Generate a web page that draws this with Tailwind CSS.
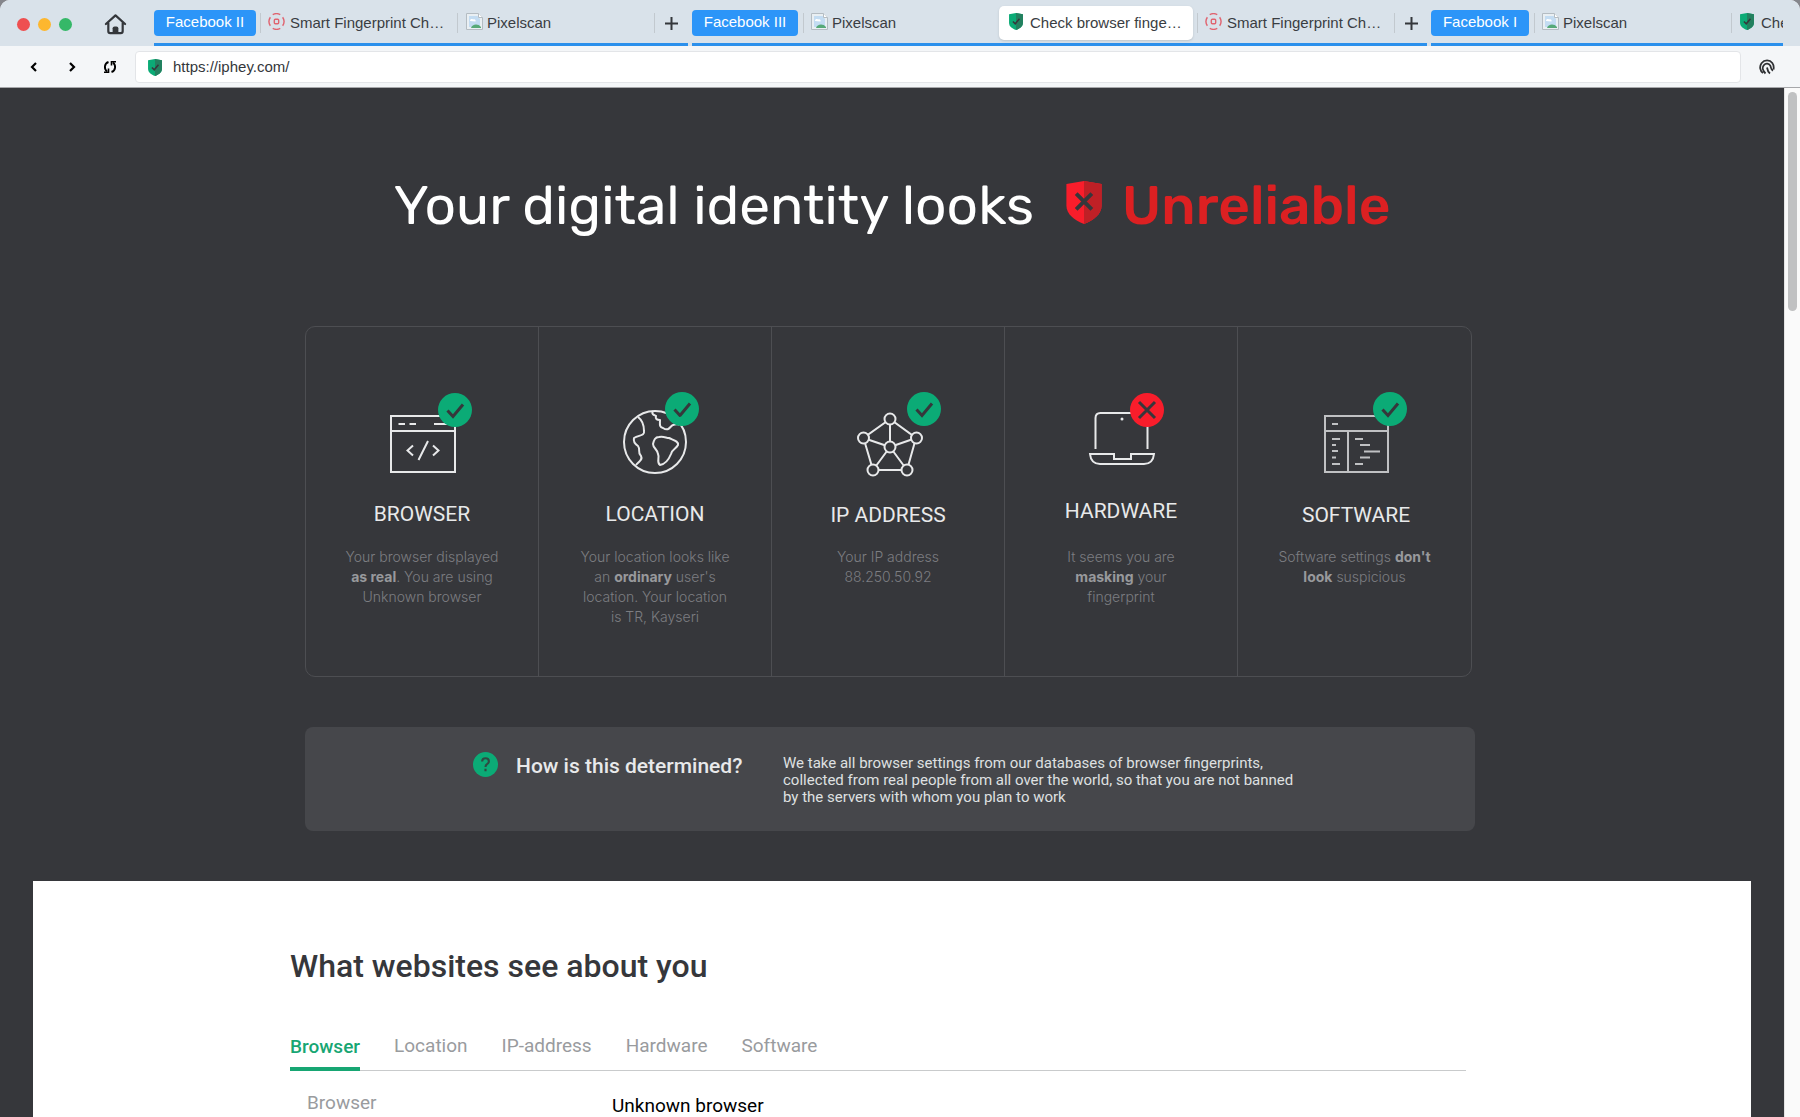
<!DOCTYPE html>
<html lang="en">
<head>
<meta charset="utf-8">
<meta name="viewport" content="width=device-width, initial-scale=1">
<title>Check browser fingerprint</title>
<script src="https://cdn.jsdelivr.net/npm/@tailwindcss/browser@4"></script>
</head>
<body class="bg-[#85868c]">
<svg class="hidden" aria-hidden="true">
  <symbol id="shield" viewBox="0 0 36 44">
    <path d="M18 0 36 3v22c0 9-8 15-18 19C8 40 0 34 0 25V3z" fill="#0bab76"/>
    <path d="M18 0 36 3v22c0 9-8 15-18 19z" fill="#23805f"/>
    <path d="M10 22l6 6 11-13" fill="none" stroke="#36373b" stroke-width="4"/>
  </symbol>
  <symbol id="target" viewBox="0 0 18 18">
    <g fill="none" stroke="#e06470" stroke-width="1.5">
      <path d="M5 1.700a8.300 8.300 0 0 1 8 0M5 16.300a8.300 8.300 0 0 0 8 0M2.500 4.500a8 8 0 0 0 0 9M15.500 4.500a8 8 0 0 1 0 9"/>
      <rect x="6.700" y="6.700" width="4.600" height="4.600" rx="1"/>
    </g>
  </symbol>
  <symbol id="broken" viewBox="0 0 17 17">
    <path d="M.5.5h12l4 4v12H.5z" fill="#e9eff3" stroke="#b4bcc2"/>
    <path d="M3 3h8.500l2.500 3v8H3z" fill="#c3dcf2"/>
    <path d="M4 8c0-2 2-2.500 3-1.500C9 5.500 10 7 9.500 8.500z" fill="#fff"/>
    <path d="M5 15c1-4 7-5 10-1v1z" fill="#56a978"/>
    <path d="M12.500.5v4h4" fill="#fff" stroke="#b4bcc2"/>
  </symbol>
  <symbol id="pass" viewBox="0 0 34 34">
    <circle cx="17" cy="17" r="17" fill="#0bab76" stroke="none"/>
    <path d="M9.500 17.500l5.500 6 10-12" fill="none" stroke="#36373b" stroke-width="3"/>
  </symbol>
  <symbol id="fail" viewBox="0 0 34 34">
    <circle cx="17" cy="17" r="17" fill="#f91d2b" stroke="none"/>
    <path d="M9 9l16 16M25 9L9 25" fill="none" stroke="#36373b" stroke-width="3"/>
  </symbol>
</svg>

<div class="flex h-screen flex-col overflow-hidden rounded-t-[10px] bg-[#f4f6f8]">
  <!-- Tab strip -->
  <header class="flex h-[46px] shrink-0 bg-[#d9e2ea] pr-[17px] font-['Liberation_Sans',Arial,sans-serif] text-[15px] text-[#393d42]">
    <div class="flex w-[154px] shrink-0 items-center pl-[17px] pt-[2px]">
      <div class="flex gap-2">
        <button aria-label="Close" class="size-[13px] rounded-full bg-[#ee4f50]"></button>
        <button aria-label="Minimize" class="size-[13px] rounded-full bg-[#fdb72f]"></button>
        <button aria-label="Zoom" class="size-[13px] rounded-full bg-[#35b868]"></button>
      </div>
      <button aria-label="Home" class="ml-8">
        <svg class="size-[23px]" viewBox="0 0 24 24" fill="none" stroke="#34373b" stroke-width="2.300" stroke-linecap="round" stroke-linejoin="round"><path d="M2 11.500 12 2.500 22 11.500M4.500 10.500V19q0 2 2 2h11q2 0 2-2v-8.500"/><path d="M9 20.500V16q0-2 2-2h2q2 0 2 2v4.500z" fill="#34373b" stroke="none"/></svg>
      </button>
    </div>
    <nav class="flex min-w-0 flex-1 gap-1 overflow-hidden" aria-label="Tabs">
      <div class="flex shrink-0 items-start border-b-3 border-[#2b90ec]">
        <button class="mt-[10px] mr-1 h-[26px] w-[102px] rounded-[4px] bg-[#2c95f8] pb-px text-white">Facebook II</button>
        <button class="mt-[13px] flex h-5 w-[197px] items-center gap-[5px] border-l border-[#c2c9cf] pl-[7px]"><svg class="mb-1 size-[17px]"><use href="#target"/></svg>Smart Fingerprint Ch…</button>
        <button class="mt-[13px] flex h-5 w-[197px] items-center gap-[4px] border-l border-[#c2c9cf] pl-2"><svg class="mb-1 size-[17px]"><use href="#broken"/></svg>Pixelscan</button>
        <button aria-label="New tab" class="mt-[13px] flex h-5 w-[34px] items-center justify-center border-l border-[#c2c9cf]"><svg class="size-[13px]" viewBox="0 0 13 13" stroke="#34373b" stroke-width="2"><path d="M6.500 0v13M0 6.500h13"/></svg></button>
      </div>
      <div class="flex shrink-0 items-start border-b-3 border-[#2b90ec]">
        <button class="mt-[10px] mr-[5px] h-[26px] w-[106px] rounded-[4px] bg-[#2c95f8] pb-px text-white">Facebook III</button>
        <button class="mt-[13px] flex h-5 w-[196px] items-center gap-[4px] border-l border-[#c2c9cf] pl-[7px]"><svg class="mb-1 size-[17px]"><use href="#broken"/></svg>Pixelscan</button>
        <button class="mt-[6px] mr-[4px] flex h-[34px] w-[194px] items-center gap-[7px] rounded-[5px] bg-white pl-[10px] shadow-sm"><svg class="mb-1 h-[17px] w-[14px]"><use href="#shield"/></svg>Check browser finge…</button>
        <button class="mt-[13px] flex h-5 w-[197px] items-center gap-[5px] border-l border-[#c2c9cf] pl-[7px]"><svg class="mb-1 size-[17px]"><use href="#target"/></svg>Smart Fingerprint Ch…</button>
        <button aria-label="New tab" class="mt-[13px] flex h-5 w-[33px] items-center justify-center border-l border-[#c2c9cf]"><svg class="size-[13px]" viewBox="0 0 13 13" stroke="#34373b" stroke-width="2"><path d="M6.500 0v13M0 6.500h13"/></svg></button>
      </div>
      <div class="flex shrink-0 items-start border-b-3 border-[#2b90ec]">
        <button class="mt-[10px] mr-[5px] h-[26px] w-[98px] rounded-[4px] bg-[#2c95f8] pb-px text-white">Facebook I</button>
        <button class="mt-[13px] flex h-5 w-[197px] items-center gap-[4px] border-l border-[#c2c9cf] pl-[7px]"><svg class="mb-1 size-[17px]"><use href="#broken"/></svg>Pixelscan</button>
        <button class="mt-[13px] flex h-5 w-[197px] items-center gap-[7px] border-l border-[#c2c9cf] pl-2"><svg class="mb-1 h-[17px] w-[14px]"><use href="#shield"/></svg>Check browser finge…</button>
      </div>
    </nav>
  </header>

  <!-- Address row -->
  <div class="flex h-[42px] shrink-0 items-center border-b border-[#a6a7aa] pt-px">
    <div class="flex w-[135px] shrink-0 items-center gap-6 pl-[27px]">
      <button aria-label="Back"><svg class="size-[14px]" viewBox="0 0 14 14" fill="none" stroke="#000" stroke-width="2.200"><path d="M9 3 5 7l4 4"/></svg></button>
      <button aria-label="Forward"><svg class="size-[14px]" viewBox="0 0 14 14" fill="none" stroke="#000" stroke-width="2.200"><path d="M5 3l4 4-4 4"/></svg></button>
      <button aria-label="Reload"><svg class="size-[14px]" viewBox="0 0 14 14" fill="none" stroke="#000" stroke-width="1.900"><path d="M5.500 2C1 3.500 1 9 4 11.500M8.500 12c4.500-1.500 4.500-7 1.500-9.500"/><path d="M1 12.200h4.500V8.500M13 1.800H8.500v3.700" stroke-width="1.600"/></svg></button>
    </div>
    <label class="flex h-8 min-w-0 flex-1 items-center gap-[11px] rounded-[4px] border border-[#e3e5e8] bg-white pl-3">
      <svg class="h-[17px] w-[14px] shrink-0" aria-hidden="true"><use href="#shield"/></svg>
      <input aria-label="Address" value="https://iphey.com/" class="w-full bg-transparent font-['Liberation_Sans',Arial,sans-serif] text-[15px] text-[#34373b] outline-none">
    </label>
    <button aria-label="Fingerprint" class="flex w-[59px] shrink-0 justify-center pr-2">
      <svg class="size-4" viewBox="0 0 16 16" fill="none" stroke="#2e3033" stroke-width="1.800"><path d="M4 14C1 12 .2 7.500 2.500 4.200 5.500.5 10.800.6 13.300 4c1.300 1.800 1.700 4 1.200 6.500M6.500 14.500C3.800 12 3 8.500 4.800 6.200c1.800-2.200 5.200-2 6.500.5.800 1.600.5 4 2.700 5M11 14.500c-2-1.500-2.500-3-3-6"/></svg>
    </button>
  </div>

  <!-- Page -->
  <div class="flex min-h-0 flex-1">
    <main class="min-w-0 flex-1 overflow-hidden bg-[#36373b] px-[33px] font-[Roboto,sans-serif]">
      <h1 class="mt-[86px] flex h-16 items-center justify-center whitespace-nowrap font-[Rubik,Roboto,sans-serif] text-[55px] text-white">
        Your digital identity looks
        <svg class="mr-5 mb-2 ml-8 h-[43px] w-[36px]" viewBox="0 0 36 44" aria-hidden="true"><path d="M18 0 36 3v22c0 9-8 15-18 19C8 40 0 34 0 25V3z" fill="#f91d2b"/><path d="M18 0 36 3v22c0 9-8 15-18 19z" fill="#bf2026"/><path d="M10 13l16 16M26 13L10 29" stroke="#36373b" stroke-width="4"/></svg>
        <span class="font-medium text-[#dc2022]">Unreliable</span>
      </h1>

      <div class="mx-auto mt-[88px] max-w-[1174px]">
        <section class="mr-[7px] grid h-[351px] grid-cols-5 divide-x divide-[#4d4e52] rounded-[10px] border border-[#4d4e52] text-center">
          <article class="flex flex-col items-center pt-[64px]">
            <svg class="h-[90px] w-[120px]" viewBox="0 0 120 90" fill="none" stroke="#e8e9ea" stroke-width="2" aria-hidden="true"><path d="M29 25h64v56H29zM29 40h64M36.500 33H43M47.500 33H54M72 33h16M51 54.500l-5.500 5 5.500 5M71 54.500l5.500 5-5.500 5M66 50l-9.500 19"/><use href="#pass" x="76" y="2" width="34" height="34"/></svg>
            <h2 class="mt-[20px] text-[21px] leading-[26px] text-[#e8e9ea]">BROWSER</h2>
            <p class="mt-5 font-[Inter,sans-serif] text-[14px] leading-5 font-light text-[#7c7d81]">Your browser displayed<br><b class="font-bold text-[#98999c]">as real</b>. You are using<br>Unknown browser</p>
          </article>
          <article class="flex flex-col items-center pt-[64px]">
            <svg class="h-[90px] w-[120px]" viewBox="0 0 120 90" fill="none" stroke="#e8e9ea" stroke-width="2" stroke-linejoin="round" aria-hidden="true"><circle cx="60" cy="51" r="31"/><path d="M43 26c4 3 6 8 6 14 1 5-5 4-10 7-1 4 1 6 4 8 3 4-1 6 3 10 2 4-2 5-5 9M58 20c-2 3 1 4 3 5-1 3 1 4 4 4 0 4-1 7 3 8 6 4 7-2 10-3 4-2 7 1 8-2"/><path d="M64 46c5-1 7 1 10 1 4 2 10 3 9 7-2 4-6 4-7 9-2 5-5 10-11 11-4-3 0-7-2-11 0-4-5-6-5-10 1-4 2-7 6-7z"/><use href="#pass" x="70" y="1" width="34" height="34"/></svg>
            <h2 class="mt-[20px] text-[21px] leading-[26px] text-[#e8e9ea]">LOCATION</h2>
            <p class="mt-5 font-[Inter,sans-serif] text-[14px] leading-5 font-light text-[#7c7d81]">Your location looks like<br>an <b class="font-bold text-[#98999c]">ordinary</b> user's<br>location. Your location<br>is TR, Kayseri</p>
          </article>
          <article class="flex flex-col items-center pt-[64px]">
            <svg class="h-[90px] w-[120px]" viewBox="-1 0 120 90" fill="none" stroke="#e8e9ea" stroke-width="2" aria-hidden="true"><path d="M61 28 34.500 47l9.500 32h34l9-32zM61 28v28M61 56l-26.500-9M61 56l26-9M61 56 44 79M61 56l17 23"/><g fill="#36373b"><circle cx="61" cy="28" r="5.500"/><circle cx="34.500" cy="47" r="5.500"/><circle cx="87.500" cy="47" r="5.500"/><circle cx="61" cy="56" r="5.500"/><circle cx="44" cy="79" r="5.500"/><circle cx="78" cy="79" r="5.500"/></g><use href="#pass" x="78" y="1" width="34" height="34"/></svg>
            <h2 class="mt-[21px] text-[21px] leading-[26px] text-[#e8e9ea]">IP ADDRESS</h2>
            <p class="mt-[19px] font-[Inter,sans-serif] text-[14px] leading-5 font-light text-[#7c7d81]">Your IP address<br>88.250.50.92</p>
          </article>
          <article class="flex flex-col items-center pt-[64px]">
            <svg class="h-[90px] w-[120px]" viewBox="-1 0 120 90" fill="none" stroke="#e8e9ea" stroke-width="2" aria-hidden="true"><path d="M33.500 58V27q0-5 5-5h42q5 0 5 5v31M28 63h24v5h17v-5h23q-1 10-10 10H38q-9 0-10-10z"/><circle cx="60" cy="28" r="1.500" fill="#e8e9ea" stroke="none"/><use href="#fail" x="68" y="2" width="34" height="34"/></svg>
            <h2 class="mt-[17px] text-[21px] leading-[26px] text-[#e8e9ea]">HARDWARE</h2>
            <p class="mt-[23px] font-[Inter,sans-serif] text-[14px] leading-5 font-light text-[#7c7d81]">It seems you are<br><b class="font-bold text-[#98999c]">masking</b> your<br>fingerprint</p>
          </article>
          <article class="flex flex-col items-center pt-[64px]">
            <svg class="h-[90px] w-[120px]" viewBox="0 0 120 90" fill="none" stroke="#c0c1c3" stroke-width="2" aria-hidden="true"><path d="M30 25h63v56H30zM30 40h63M53 40v41M37 33h6M37 48h8M37 54h4M37 60h6M37 66.500h4M37 73h8M60 48h8M65 54h10M69 60.500h16M65 66.500h10M60 73h8"/><use href="#pass" x="78" y="1" width="34" height="34"/></svg>
            <h2 class="mt-[21px] pl-[3px] text-[21px] leading-[26px] text-[#e8e9ea]">SOFTWARE</h2>
            <p class="mt-[19px] font-[Inter,sans-serif] text-[14px] leading-5 font-light text-[#7c7d81]">Software settings <b class="font-bold text-[#98999c]">don't</b><br><b class="font-bold text-[#98999c]">look</b> suspicious</p>
          </article>
        </section>

        <section class="mt-[50px] mr-1 flex h-[104px] items-start rounded-[8px] bg-[#46474b] pt-[25px] pl-[168px]">
          <svg class="size-[25px]" viewBox="0 0 26 26" aria-hidden="true"><circle cx="13" cy="13" r="13" fill="#0bab76"/><path d="M9.500 10q0-3.500 3.500-3.500t3.500 3q0 2-2 3.200Q13 13.500 13 15.500M13 17.500v2.500" fill="none" stroke="#2f4a42" stroke-width="2.200"/></svg>
          <h3 class="ml-[18px] w-[267px] text-[21px] leading-7 font-medium text-[#e8e9ea]">How is this determined?</h3>
          <p class="mt-[3px] text-[15px] leading-[17px] text-[#dfe0e1]">We take all browser settings from our databases of browser fingerprints,<br>collected from real people from all over the world, so that you are not banned<br>by the servers with whom you plan to work</p>
        </section>
      </div>

      <section class="mt-[50px] min-h-full bg-white">
        <div class="mx-auto max-w-[1204px] pt-[65px] pr-7">
          <h2 class="text-[32px] leading-10 font-medium text-[#36373b]">What websites see about you</h2>
          <div class="mt-[48px] flex gap-[34px] border-b border-[#c9cbcc] text-[19px] leading-6 text-[#999b9e]">
            <button class="-mb-px border-b-4 border-[#17a673] pb-2 font-medium text-[#17a673]">Browser</button>
            <button class="pb-3">Location</button>
            <button class="pb-3">IP-address</button>
            <button class="pb-3">Hardware</button>
            <button class="pb-3">Software</button>
          </div>
          <table class="mt-5 w-full text-left text-[19px] leading-6">
            <tr><th scope="row" class="w-[322px] pl-[17px] align-top font-normal text-[#999b9e]">Browser</th><td class="pt-[3px] text-black">Unknown browser</td></tr>
          </table>
        </div>
      </section>
    </main>
    <div class="w-4 shrink-0 border-l border-[#e4e4e4] bg-[#fafafa] px-[3px] pt-1" aria-hidden="true">
      <div class="h-[219px] rounded-full bg-[#c0c1c2]"></div>
    </div>
  </div>
</div>
</body>
</html>
